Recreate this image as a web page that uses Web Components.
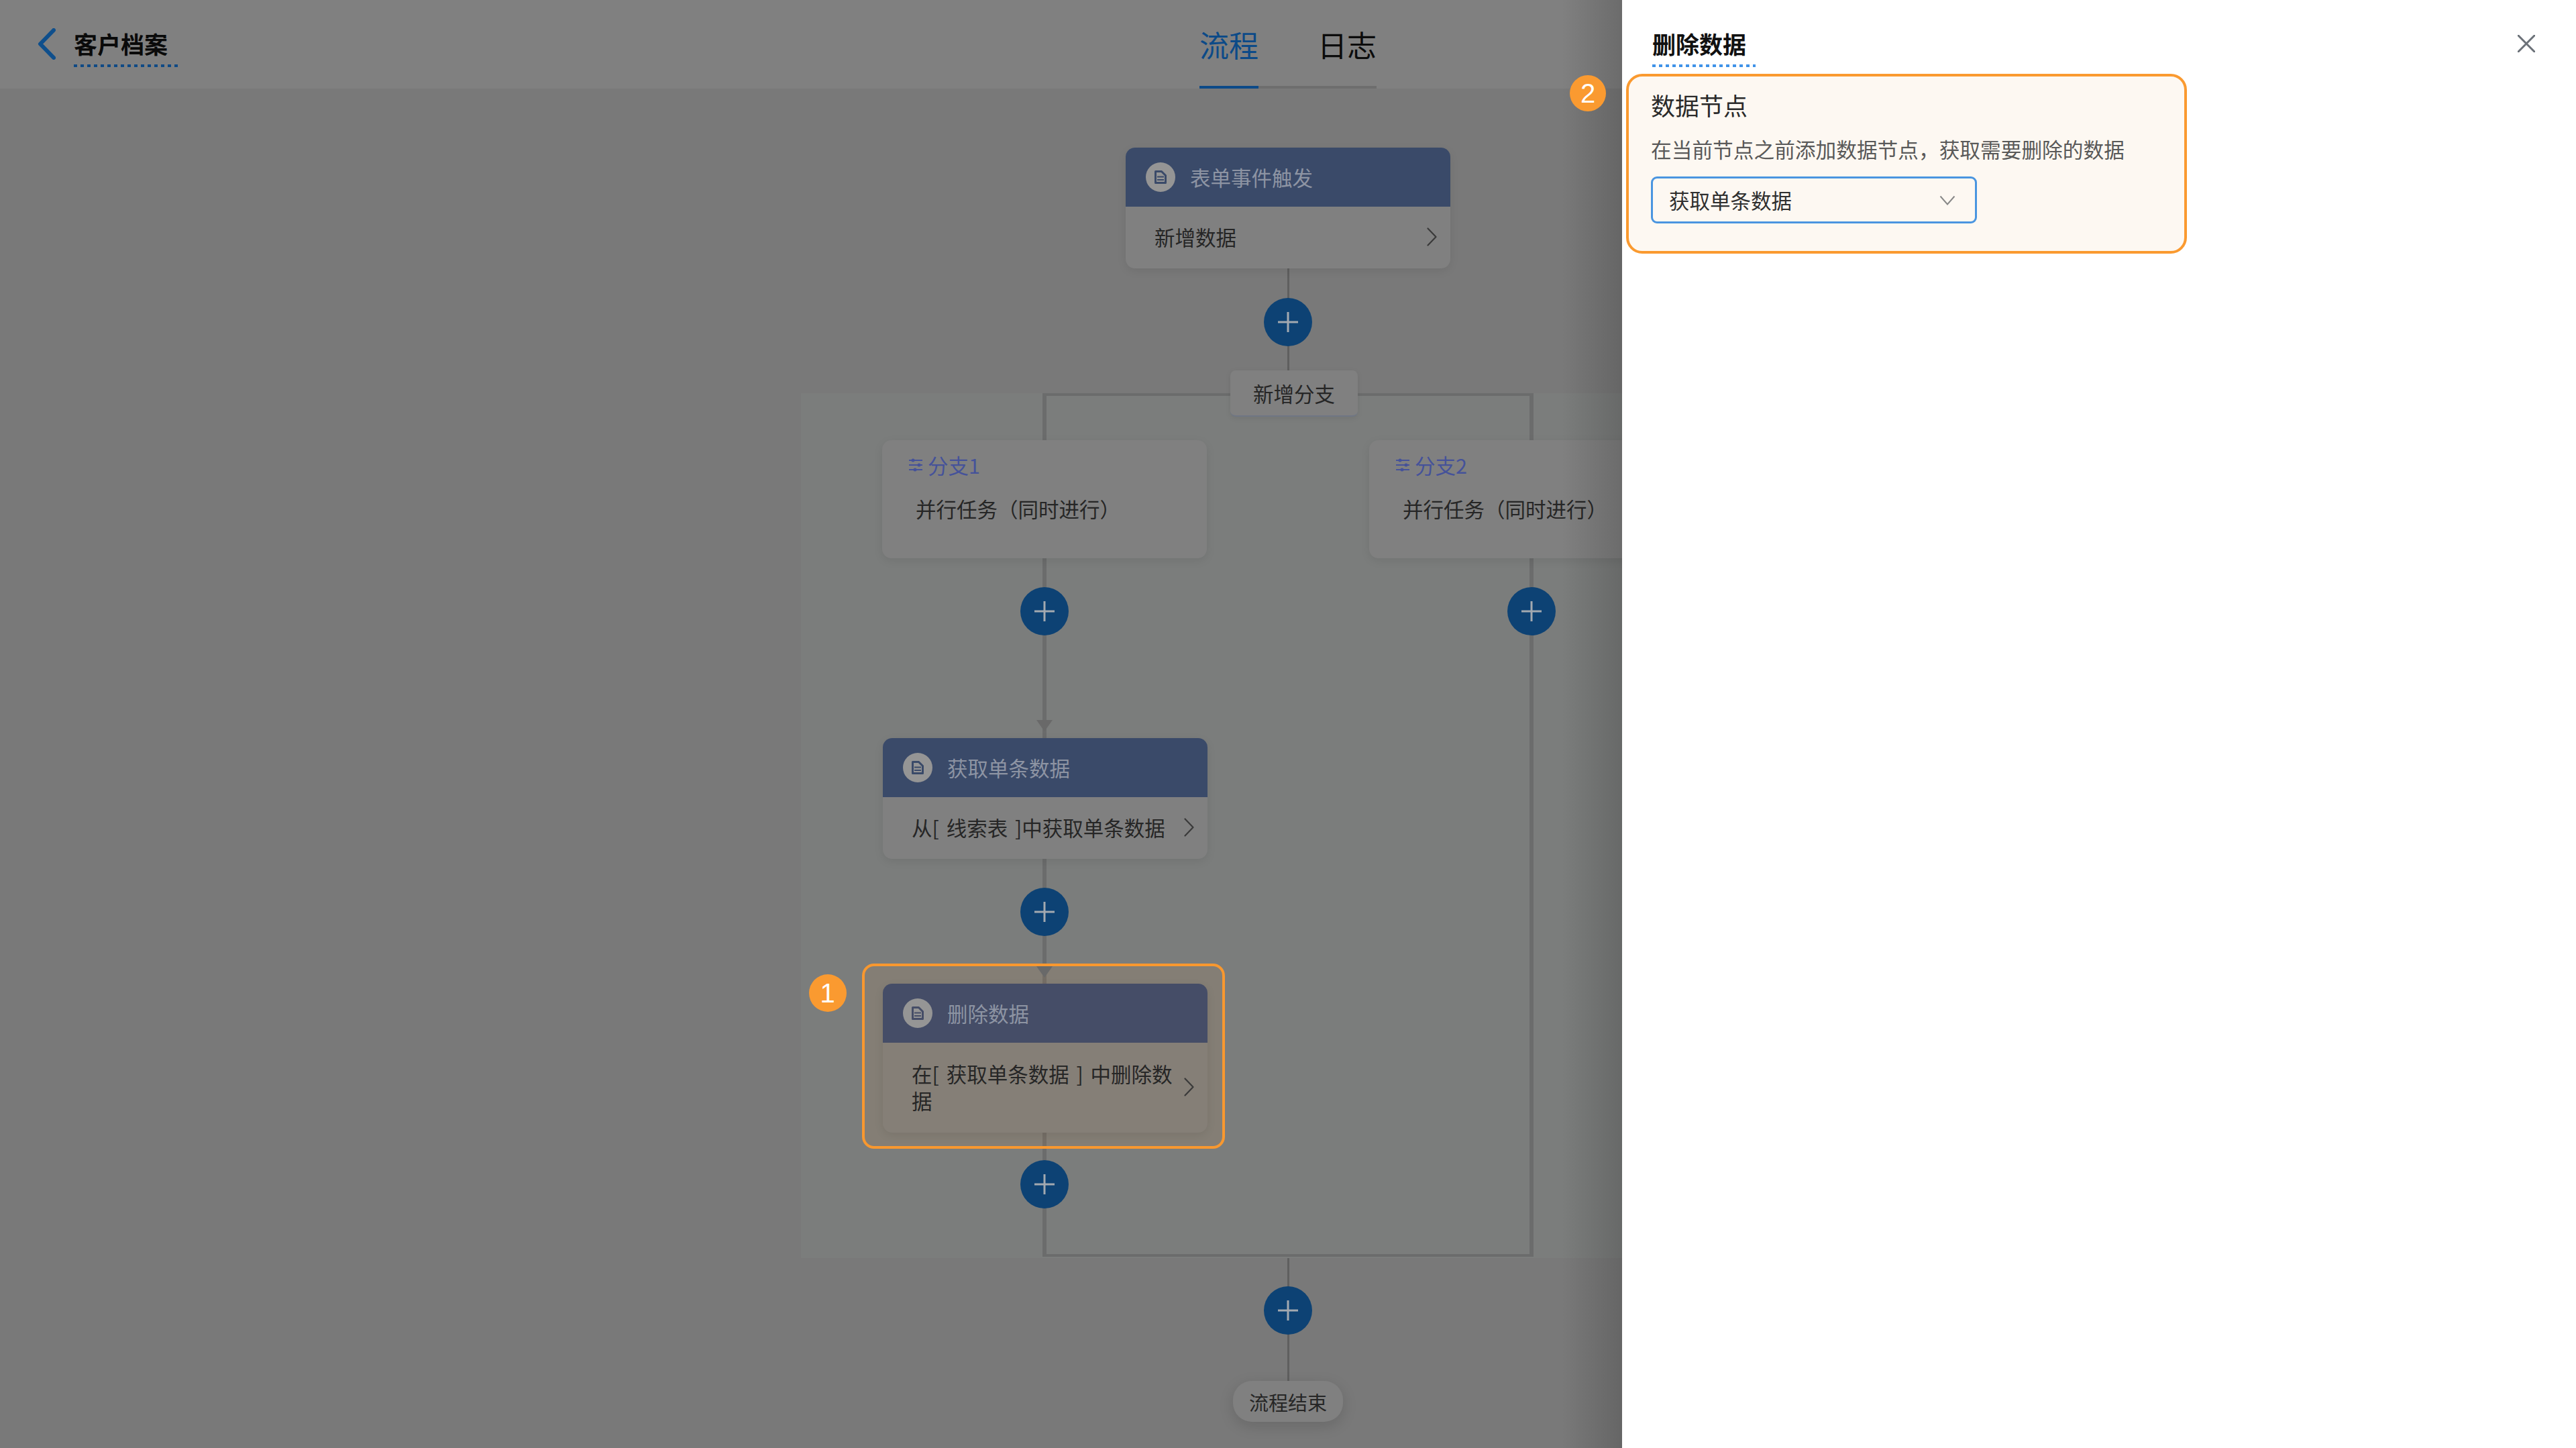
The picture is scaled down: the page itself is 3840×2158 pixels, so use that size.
<!DOCTYPE html>
<html lang="zh">
<head>
<meta charset="utf-8">
<title>客户档案</title>
<style>
  html, body { margin: 0; padding: 0; }
  body { font-family: "Noto Sans CJK SC", "Noto Sans", sans-serif; }
</style>
</head>
<body>
<app-shell>
  <top-bar slot="top"></top-bar>

  <flow-line>
    <flow-node title="表单事件触发" style="height:180px;">新增数据</flow-node>
    <flow-add style="margin:44px 0 36px;"></flow-add>
    <branch-add>新增分支</branch-add>
  </flow-line>

  <flow-branches>
    <flow-branch side="left">
      <branch-card name="分支1"></branch-card>
      <flow-add style="margin-top:43px;"></flow-add>
      <flow-arrow style="margin:126px 0 10px;"></flow-arrow>
      <flow-node title="获取单条数据" style="height:180px; margin-left:2px;">从[ 线索表 ]中获取单条数据</flow-node>
      <flow-add style="margin:43px 0 41px;"></flow-add>
      <flow-mark number="1">
        <flow-arrow style="margin:0 0 9px 4px;"></flow-arrow>
        <flow-node title="删除数据" tinted style="height:222px; margin-left:6px;">在[ 获取单条数据 ] 中删除数据</flow-node>
      </flow-mark>
      <flow-add style="margin-top:17px;"></flow-add>
    </flow-branch>
    <flow-branch side="right">
      <branch-card name="分支2"></branch-card>
      <flow-add style="margin-top:43px;"></flow-add>
    </flow-branch>
  </flow-branches>

  <flow-line>
    <flow-add style="margin:42px 0 69px;"></flow-add>
    <flow-end>流程结束</flow-end>
  </flow-line>

  <side-drawer slot="drawer" heading="删除数据">
    <data-panel label="数据节点" hint="在当前节点之前添加数据节点，获取需要删除的数据" value="获取单条数据"></data-panel>
  </side-drawer>
</app-shell>

<script>
const CHEVRON = `<svg width="15" height="28" viewBox="0 0 15 28" fill="none"><path d="M1.5 1.5 13.5 14 1.5 26.5" stroke="currentColor" stroke-width="2.2" stroke-linecap="round" stroke-linejoin="round"/></svg>`;

class AppShell extends HTMLElement {
  constructor() {
    super();
    const root = this.attachShadow({mode: 'open'});
    root.innerHTML = `<style>
    :host {
      display: block;
      position: relative;
      width: 3840px;
      height: 2158px;
      overflow: hidden;
      background: #797979;
      color: #262626;
    }
    .canvas {
      display: flex;
      flex-direction: column;
      align-items: center;
      padding-top: 88px;
    }
    .fade {
      position: absolute;
      top: 0;
      bottom: 0;
      right: 1422px;
      width: 90px;
      background: linear-gradient(to right, rgba(0,0,0,0), rgba(0,0,0,.16));
      pointer-events: none;
    }
    </style>
    <slot name="top"></slot>
    <div class="canvas"><slot></slot></div>
    <div class="fade"></div>
    <slot name="drawer"></slot>`;
  }
}

class TopBar extends HTMLElement {
  constructor() {
    super();
    const root = this.attachShadow({mode: 'open'});
    root.innerHTML = `<style>
    :host {
      display: grid;
      grid-template-columns: 1fr auto 1fr;
      height: 132px;
      background: #808080;
    }
    .back {
      display: flex;
      align-items: flex-start;
      padding: 42px 0 0 56px;
      gap: 27px;
    }
    .name {
      font-size: 35px;
      line-height: 46px;
      font-weight: 700;
      color: #0a0a0a;
      width: 155px;
      height: 58px;
      background: repeating-linear-gradient(to right, #0f4a85 0 5px, transparent 5px 10px) left bottom / 100% 4px no-repeat;
      white-space: nowrap;
    }
    .tabs {
      display: flex;
      height: 132px;
    }
    .tab {
      font-size: 44px;
      line-height: 60px;
      padding: 36px 0 0;
      box-sizing: border-box;
      height: 132px;
      border-bottom: 4px solid #6e6e6e;
      color: #0c0c0c;
    }
    .tab.on {
      color: #0c4a88;
      border-bottom-color: #0c4a88;
    }
    .tab + .tab { padding-left: 88px; }
    </style>
    <div class="back">
      <svg width="27" height="47" viewBox="0 0 27 47" fill="none"><path d="M24 3 4 23.5 24 44" stroke="#0f4f8c" stroke-width="6" stroke-linecap="round" stroke-linejoin="round"/></svg>
      <div class="name">客户档案</div>
    </div>
    <div class="tabs">
      <div class="tab on">流程</div>
      <div class="tab">日志</div>
    </div>
    <div></div>`;
  }
}

class FlowLine extends HTMLElement {
  constructor() {
    super();
    const root = this.attachShadow({mode: 'open'});
    root.innerHTML = `<style>
    :host {
      display: flex;
      flex-direction: column;
      align-items: center;
      background: linear-gradient(#5f5f5f, #5f5f5f) center top / 3px 100% no-repeat;
    }
    </style>
    <slot></slot>`;
  }
}

class FlowAdd extends HTMLElement {
  constructor() {
    super();
    const root = this.attachShadow({mode: 'open'});
    root.innerHTML = `<style>
    :host {
      display: flex;
      align-items: center;
      justify-content: center;
      flex: none;
      width: 72px;
      height: 72px;
      border-radius: 50%;
      background: #0d4274;
    }
    </style>
    <svg width="30" height="30" viewBox="0 0 30 30"><path d="M15 0V30M0 15H30" stroke="#a3a9b0" stroke-width="3"/></svg>`;
  }
}

class BranchAdd extends HTMLElement {
  constructor() {
    super();
    const root = this.attachShadow({mode: 'open'});
    root.innerHTML = `<style>
    :host {
      display: flex;
      align-items: center;
      justify-content: center;
      position: relative;
      z-index: 2;
      flex: none;
      width: 190px;
      height: 69px;
      margin: 0 0 -35px 18px;
      box-sizing: border-box;
      border-radius: 8px;
      background: #808080;
      border-bottom: 2px solid #6f7684;
      font-size: 30.5px;
      color: #262626;
      box-shadow: 0 2px 8px rgba(0,0,0,.08);
    }
    </style><slot></slot>`;
  }
}

class FlowArrow extends HTMLElement {
  constructor() {
    super();
    const root = this.attachShadow({mode: 'open'});
    root.innerHTML = `<style>
    :host { display: block; flex: none; width: 24px; height: 17px; }
    svg { display: block; }
    </style>
    <svg width="24" height="17" viewBox="0 0 24 17"><path d="M0 0H24L12 17Z" fill="#696969"/></svg>`;
  }
}

class FlowNode extends HTMLElement {
  constructor() {
    super();
    const root = this.attachShadow({mode: 'open'});
    root.innerHTML = `<style>
    :host {
      display: flex;
      flex-direction: column;
      flex: none;
      width: 484px;
      border-radius: 14px;
      overflow: hidden;
      background: #808080;
      box-shadow: 0 4px 14px rgba(0,0,0,.08);
      position: relative;
    }
    :host([tinted]) { background: #857f77; }
    :host([tinted]) .head { background: #454d67; }
    :host([tinted]) .doc { stroke: #454d67; }
    .head {
      display: flex;
      align-items: center;
      gap: 22px;
      flex: none;
      height: 88px;
      padding-left: 30px;
      background: #3a4a69;
      color: #8d94a3;
      font-size: 30.5px;
    }
    .dot {
      display: flex;
      align-items: center;
      justify-content: center;
      width: 44px;
      height: 44px;
      border-radius: 50%;
      background: #959595;
    }
    .body {
      flex: 1;
      display: flex;
      align-items: center;
      padding: 0 20px 2px 43px;
      font-size: 30.5px;
      line-height: 40px;
      color: #262626;
      word-spacing: 4px;
    }
    .text { flex: 1; min-width: 0; padding-right: 10px; }
    .go { color: #3a3a3a; display: flex; margin-left: 2px; }
    </style>
    <div class="head">
      <div class="dot">
        <svg width="20" height="20" viewBox="0 0 20 20" fill="none">
          <path class="doc" d="M2.5 1.5H11.5L17.5 7.5V18.5H2.5Z" stroke="#3a4a69" stroke-width="3" stroke-linejoin="round"/>
          <path class="doc" d="M5 9.5H15M5 14H15" stroke="#3a4a69" stroke-width="2.2"/>
        </svg>
      </div>
      <span id="title"></span>
    </div>
    <div class="body">
      <div class="text"><slot></slot></div>
      <div class="go">${CHEVRON}</div>
    </div>`;
    root.getElementById('title').textContent = this.getAttribute('title');
  }
}

class BranchCard extends HTMLElement {
  constructor() {
    super();
    const root = this.attachShadow({mode: 'open'});
    root.innerHTML = `<style>
    :host {
      display: block;
      flex: none;
      box-sizing: border-box;
      width: 484px;
      height: 176px;
      padding: 16px 0 0 40px;
      border-radius: 14px;
      background: #808080;
      box-shadow: 0 4px 14px rgba(0,0,0,.08);
    }
    .name {
      display: flex;
      align-items: center;
      gap: 8px;
      height: 42px;
      font-size: 30.5px;
      color: #45529a;
    }
    .task {
      margin: 23px 0 0 10px;
      font-size: 30.5px;
      line-height: 42px;
      color: #262626;
    }
    </style>
    <div class="name">
      <svg width="20" height="20" viewBox="0 0 20 20" fill="#45529a" stroke="#45529a" stroke-width="1.8">
        <path d="M0 3H20M0 10H20M0 17H20" fill="none"/>
        <circle cx="6" cy="3" r="1.6"/>
        <circle cx="15" cy="10" r="1.6"/>
        <circle cx="9" cy="17" r="1.6"/>
      </svg>
      <span id="name"></span>
    </div>
    <div class="task">并行任务（同时进行）</div>`;
    root.getElementById('name').textContent = this.getAttribute('name');
  }
}

class FlowBranches extends HTMLElement {
  constructor() {
    super();
    const root = this.attachShadow({mode: 'open'});
    root.innerHTML = `<style>
    :host {
      display: grid;
      grid-template-columns: 726px 726px;
      justify-content: center;
      box-sizing: border-box;
      width: 1452px;
      height: 1289px;
      padding: 0 0 2px;
      background: #7b7d7c;
    }
    </style>
    <slot></slot>`;
  }
}

class FlowBranch extends HTMLElement {
  constructor() {
    super();
    const root = this.attachShadow({mode: 'open'});
    const inner = this.getAttribute('side') == 'left' ? 'right' : 'left';
    root.innerHTML = `<style>
    :host {
      display: flex;
      flex-direction: column;
      align-items: center;
      padding-top: 70px;
      background:
        linear-gradient(#6b6c6c, #6b6c6c) ${inner} top / 50% 4px no-repeat,
        linear-gradient(#6b6c6c, #6b6c6c) ${inner} bottom / 50% 4px no-repeat,
        linear-gradient(#6b6c6c, #6b6c6c) center top / 6px 100% no-repeat;
    }
    </style>
    <slot></slot>`;
  }
}

class FlowMark extends HTMLElement {
  constructor() {
    super();
    const root = this.attachShadow({mode: 'open'});
    root.innerHTML = `<style>
    :host {
      display: flex;
      flex-direction: column;
      align-items: center;
      position: relative;
      flex: none;
      box-sizing: border-box;
      width: 541px;
      height: 276px;
      margin-right: 4px;
      border: 4px solid #f8982f;
      border-radius: 18px;
      background: rgba(255,140,30,.07);
    }
    number-badge { position: absolute; left: -83px; top: 12px; }
    </style>
    <number-badge id="n"></number-badge>
    <slot></slot>`;
    root.getElementById('n').textContent = this.getAttribute('number');
  }
}

class NumberBadge extends HTMLElement {
  constructor() {
    super();
    const root = this.attachShadow({mode: 'open'});
    root.innerHTML = `<style>
    :host {
      display: flex;
      align-items: center;
      justify-content: center;
      width: 56px;
      height: 56px;
      border-radius: 50%;
      background: #fa9a30;
      color: #fff;
      font: 40px/1 "Liberation Sans", "Noto Sans", sans-serif;
    }
    </style><slot></slot>`;
  }
}

class FlowEnd extends HTMLElement {
  constructor() {
    super();
    const root = this.attachShadow({mode: 'open'});
    root.innerHTML = `<style>
    :host {
      display: flex;
      align-items: center;
      justify-content: center;
      width: 164px;
      height: 61px;
      border-radius: 28px;
      background: #808080;
      font-size: 29px;
      color: #262626;
      box-shadow: 0 6px 22px rgba(0,0,0,.14);
    }
    </style><slot></slot>`;
  }
}

class SideDrawer extends HTMLElement {
  constructor() {
    super();
    const root = this.attachShadow({mode: 'open'});
    root.innerHTML = `<style>
    :host {
      display: block;
      position: absolute;
      top: 0;
      right: 0;
      bottom: 0;
      width: 1422px;
      background: #fff;
    }
    .head {
      display: flex;
      justify-content: space-between;
      align-items: flex-start;
      height: 110px;
      padding: 42px 61px 0 45px;
      box-sizing: border-box;
    }
    .name {
      font-size: 35px;
      line-height: 46px;
      font-weight: 700;
      width: 154px;
      height: 58px;
      color: #111;
      background: repeating-linear-gradient(to right, #3f92e8 0 5px, transparent 5px 10px) left bottom / 100% 4px no-repeat;
      white-space: nowrap;
    }
    .x { margin-top: 10px; }
    .body { padding-left: 6px; }
    </style>
    <div class="head">
      <div class="name" id="name"></div>
      <svg class="x" width="26" height="26" viewBox="0 0 26 26"><path d="M1 1 25 25M25 1 1 25" stroke="#6b7178" stroke-width="3" stroke-linecap="round"/></svg>
    </div>
    <div class="body"><slot></slot></div>`;
    root.getElementById('name').textContent = this.getAttribute('heading');
  }
}

class DataPanel extends HTMLElement {
  constructor() {
    super();
    const root = this.attachShadow({mode: 'open'});
    root.innerHTML = `<style>
    :host {
      display: block;
      position: relative;
      box-sizing: border-box;
      width: 836px;
      height: 268px;
      padding: 18px 0 0 33px;
      border: 4px solid #fa9a30;
      border-radius: 24px;
      background: #fdf8f2;
    }
    number-badge { position: absolute; left: -88px; top: -2px; width: 54px; height: 54px; }
    .label { font-size: 36px; line-height: 48px; color: #2a2a2a; }
    .hint { margin-top: 21px; font-size: 30.7px; line-height: 42px; color: #595959; white-space: nowrap; }
    .select {
      display: flex;
      align-items: center;
      justify-content: space-between;
      box-sizing: border-box;
      width: 486px;
      height: 70px;
      margin-top: 20px;
      padding: 0 29px 0 24px;
      border: 3px solid #4a95e0;
      border-radius: 9px;
      font-size: 30.5px;
      color: #2f2f2f;
    }
    </style>
    <number-badge>2</number-badge>
    <div class="label" id="label"></div>
    <div class="hint" id="hint"></div>
    <div class="select">
      <span id="value"></span>
      <svg width="24" height="15" viewBox="0 0 24 15" fill="none"><path d="M1.5 1.5 12 13.5 22.5 1.5" stroke="#888" stroke-width="2"/></svg>
    </div>`;
    root.getElementById('label').textContent = this.getAttribute('label');
    root.getElementById('hint').textContent = this.getAttribute('hint');
    root.getElementById('value').textContent = this.getAttribute('value');
  }
}

customElements.define('number-badge', NumberBadge);
customElements.define('app-shell', AppShell);
customElements.define('top-bar', TopBar);
customElements.define('flow-line', FlowLine);
customElements.define('flow-add', FlowAdd);
customElements.define('branch-add', BranchAdd);
customElements.define('flow-arrow', FlowArrow);
customElements.define('flow-node', FlowNode);
customElements.define('branch-card', BranchCard);
customElements.define('flow-branches', FlowBranches);
customElements.define('flow-branch', FlowBranch);
customElements.define('flow-mark', FlowMark);
customElements.define('flow-end', FlowEnd);
customElements.define('side-drawer', SideDrawer);
customElements.define('data-panel', DataPanel);
</script>
</body>
</html>
